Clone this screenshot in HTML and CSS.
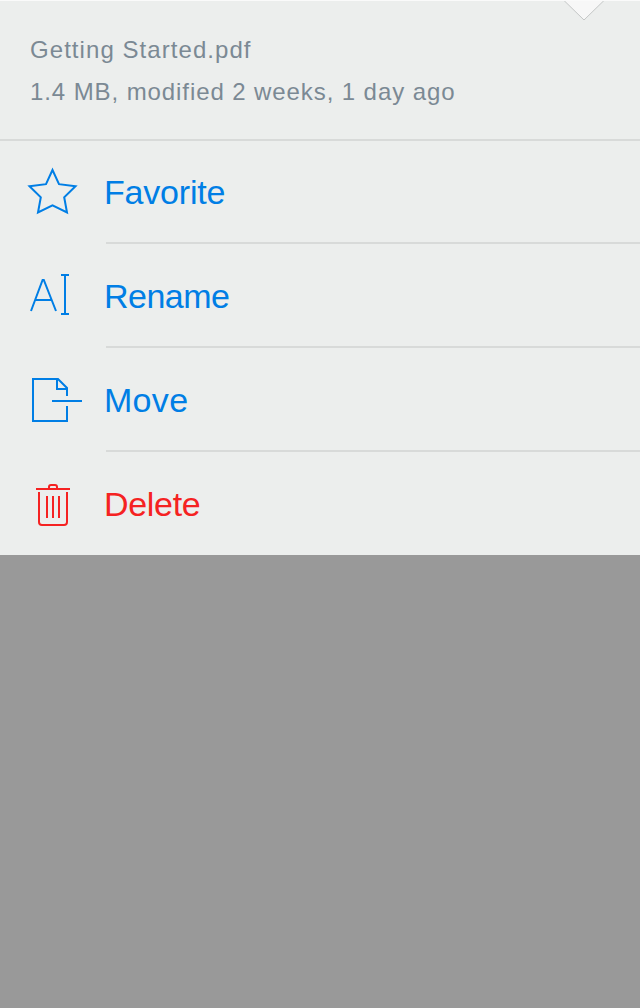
FILE: index.html
```
<!DOCTYPE html>
<html lang="en">
<head>
<meta charset="utf-8">
<title>Getting Started.pdf</title>
<link rel="stylesheet" href="styles.css">
</head>
<body>
<main class="sheet">
  <svg class="pointer" width="44" height="22" viewBox="0 0 44 22"><path d="M1.5 0 22 20 42.5 0" fill="#f7f7f7" stroke="#c4c6c6" stroke-width="1"/></svg>
  <header class="info">
    <div class="name">Getting Started.pdf</div>
    <div class="details">1.4 MB, modified 2 weeks, 1 day ago</div>
  </header>
  <nav class="actions">
    <a class="action">
      <svg class="icon" viewBox="0 0 104 102"><path d="M52.5 30 59 44.2 75.5 46.3 64.2 57.3 67 72.5 52.5 65.3 38 72.5 40.8 57.3 29.5 46.3 46 44.2Z"/></svg>
      <span class="label favorite">Favorite</span>
    </a>
    <a class="action">
      <svg class="icon" viewBox="0 0 104 102"><path d="M31 67 42.6 36H43.8L56 67M35.5 56H51.5M61 31H69M65 31V70M61 70H69"/></svg>
      <span class="label rename">Rename</span>
    </a>
    <a class="action">
      <svg class="icon" viewBox="0 0 104 102"><path d="M67 58V73H33V31H58L67 40V48M57 31V41H67M52 53H82"/></svg>
      <span class="label move">Move</span>
    </a>
    <a class="action delete">
      <svg class="icon" viewBox="0 0 104 102"><path d="M36 37H70M49 37V35Q49 33 51 33H55Q57 33 57 35V37M39 40V70Q39 73 42 73H64Q67 73 67 70V40M47 44V66M53 44V66M59 44V66"/></svg>
      <span class="label">Delete</span>
    </a>
  </nav>
</main>
</body>
</html>
```
FILE: styles.css
```
body {
  margin: 0;
  background: #999;
  font-family: "Liberation Sans", Arial, sans-serif;
}
.sheet {
  position: relative;
  box-sizing: border-box;
  height: 555px;
  overflow: hidden;
  background: #eceeed;
  border-top: 1px solid #fafafa;
}
.pointer {
  position: absolute;
  top: -1px;
  left: 562px;
}
.info {
  box-sizing: border-box;
  height: 140px;
  padding: 28px 30px 0;
  border-bottom: 2px solid #d8dad9;
  color: #7b8994;
  font-size: 24px;
  line-height: 42px;
  white-space: nowrap;
}
.name { letter-spacing: 1.06px; }
.details { letter-spacing: 0.91px; }
.actions {
  display: flex;
  flex-direction: column;
}
.action {
  display: flex;
  height: 104px;
  color: #007ee5;
}
.action:first-child { height: 103px; }
.icon {
  flex: none;
  width: 104px;
  height: 102px;
  fill: none;
  stroke: currentColor;
  stroke-width: 2;
}
.action:first-child .icon { margin-top: -1px; }
.label {
  flex: 1;
  box-sizing: border-box;
  margin-left: 2px;
  border-bottom: 2px solid #d8dad9;
  text-indent: -2px;
  font-size: 34px;
  line-height: 104px;
}
.action:first-child .label { line-height: 103px; }
.favorite { letter-spacing: -0.2px; }
.rename { letter-spacing: -0.5px; }
.move { letter-spacing: 0.3px; }
.delete { color: #f52222; }
.delete .label {
  border-bottom: 0;
  letter-spacing: -0.3px;
}
```
